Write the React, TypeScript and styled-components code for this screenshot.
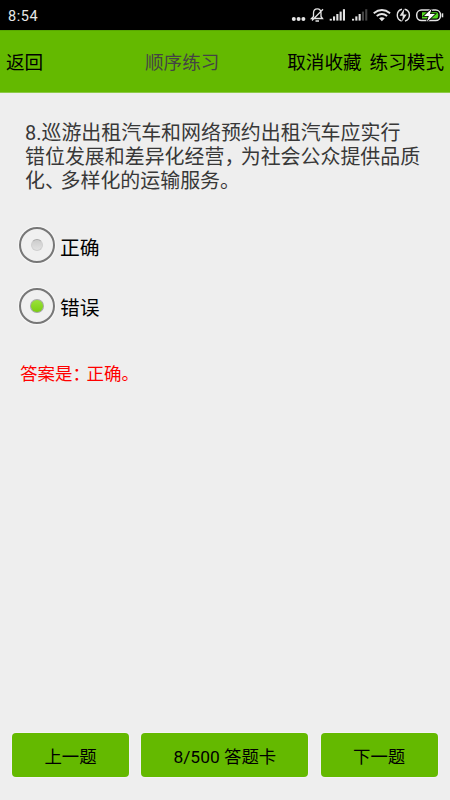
import React from "react";
import styled, { createGlobalStyle } from "styled-components";

const GlobalStyle = createGlobalStyle`
  * { box-sizing: border-box; }
  body { margin: 0; background: #eee; }
`;

const GREEN = "#64b900";

const Screen = styled.div`
  width: 450px;
  height: 800px;
  display: flex;
  flex-direction: column;
  overflow: hidden;
  background: #eeeeee;
  color: #000;
  font-family: Roboto, "Noto Sans CJK SC", sans-serif;
`;

const StatusBar = styled.div`
  height: 30px;
  flex: none;
  display: flex;
  justify-content: space-between;
  background: #000;
`;

const Clock = styled.span`
  padding-left: 8px;
  font: 14.5px/33px Roboto, sans-serif;
  letter-spacing: 0.6px;
  color: #e6e6e6;
`;

const StatusIcons = styled.svg`
  display: block;
  width: 170px;
  height: 30px;
`;

const Header = styled.header`
  height: 63px;
  flex: none;
  display: grid;
  grid-template-columns: 139px 88px 1fr;
  align-items: center;
  padding: 3px 6px 0 6px;
  border-top: 1px solid #59a800;
  border-bottom: 1px solid #8dca47;
  background: ${GREEN};
  font-size: 18.6px;
  line-height: 26px;
  white-space: nowrap;
`;

const Title = styled.span`
  color: #444;
`;

const Actions = styled.div`
  display: flex;
  justify-content: flex-end;
  gap: 8px;
`;

const Content = styled.main`
  flex: 1;
`;

const Question = styled.div`
  margin: 28px 0 0 25px;
  font-size: 19.95px;
  line-height: 24px;
  color: #383838;
  white-space: nowrap;
`;

const Mark = styled.span<{ $w: number; $inset?: number }>`
  display: inline-block;
  width: ${(p) => p.$w}px;
  padding-left: ${(p) => p.$inset ?? 0}px;
  font-feature-settings: "halt" 1;
`;

const Options = styled.div`
  display: grid;
  grid-auto-rows: 60.5px;
  margin: 22px 0 0 19px;
`;

const Option = styled.div`
  display: flex;
  align-items: center;
  gap: 5px;
  font-size: 19.8px;
  line-height: 26px;
`;

const OptionText = styled.span`
  padding-top: 7px;
`;

const Radio = styled.span`
  width: 36px;
  height: 36px;
  display: grid;
  place-items: center;
  border: 2px solid #777;
  border-radius: 50%;
  background: #f0f0f0;
  box-shadow: 0 0 1px 1px #f8f8f8;
`;

const Dot = styled.span<{ $on: boolean }>`
  width: ${(p) => (p.$on ? 14 : 12)}px;
  height: ${(p) => (p.$on ? 14 : 12)}px;
  border-radius: 50%;
  border: 1px solid ${(p) => (p.$on ? "#a2a8a0" : "#cfcfcf")};
  border-top-color: #aaa;
  background: ${(p) =>
    p.$on
      ? "linear-gradient(#9be23b, #7bce12)"
      : "linear-gradient(#cccccc, #e2e2e2)"};
`;

const Answer = styled.p`
  margin: 26px 0 0 20px;
  font-size: 17.5px;
  line-height: 24px;
  color: #ff0000;
`;

const Footer = styled.footer`
  height: 67px;
  flex: none;
  display: grid;
  grid-template-columns: 117px 167px 117px;
  grid-template-rows: 44px;
  gap: 12.300px;
  padding-left: 12px;
`;

const Button = styled.button`
  border: 0;
  border-radius: 4px;
  padding: 3px 0 0;
  background: ${GREEN};
  box-shadow: 0 0 1px 1px #f4f2f7;
  font: 17.4px/24px Roboto, "Noto Sans CJK SC", sans-serif;
  color: #000;
`;

const bars = [0, 1, 2, 3, 4];

function SystemIcons() {
  return (
    <StatusIcons viewBox="280 0 170 30" fill="none" stroke="#e4e4e4">
      <g fill="#e4e4e4" stroke="none">
        <circle cx="293.8" cy="19" r="2" />
        <circle cx="298.6" cy="19" r="2" />
        <circle cx="303.4" cy="19" r="2" />
        {bars.map((i) => (
          <rect key={i} x={329.7 + i * 3.3} y={18.8 - i * 2.4} width="2.1" height={1.8 + i * 2.4} />
        ))}
        {bars.map((i) => (
          <rect key={i} x={352 + i * 3.3} y={18.8 - i * 2.4} width="2.1" height={1.8 + i * 2.4} opacity={i > 2 ? 0.3 : 1} />
        ))}
      </g>
      <path d="M311.5 18.5h11l-1.500-2V13c0-3-1.500-4.200-3.700-4.200s-3.800 1.400-3.800 4.200v3.500zM315.500 21h3.500M312 20.500L323 9.200" strokeWidth="1.3" />
      <path d="M373.700 13.200q8.200-6.500 16.400 0M376.700 16.100q5.200-4 10.400 0" strokeWidth="1.9" />
      <path d="M379 18.200q2.900-2 5.800 0l-2.900 3z" fill="#e4e4e4" stroke="none" />
      <path d="M402 9.300a6.100 6.100 0 0 0-.3 11.800M404.700 9.300a6.100 6.100 0 0 1 .3 11.800" strokeWidth="1.4" />
      <path d="M404.300 8.800l-4.700 7h3.200l-.8 5.700 4.700-7.100h-3.200z" fill="#e4e4e4" stroke="none" />
      <rect x="416.700" y="10" width="23.800" height="10.600" rx="4.800" strokeWidth="1.500" />
      <path d="M422 12.200h14.500q1.800 0 1.800 3.100t-1.800 3.100H422z" fill="#52d91e" stroke="none" />
      <path d="M442.500 13.300v4" strokeWidth="1.500" />
      <path d="M431.600 8.800l-7.600 7.200h4.800l-2 5.700 8.200-7.700h-5z" fill="#fff" stroke="#000" strokeWidth="1.600" paintOrder="stroke" />
    </StatusIcons>
  );
}

export default function App() {
  return (
    <Screen>
      <GlobalStyle />
      <StatusBar>
        <Clock>8:54</Clock>
        <SystemIcons />
      </StatusBar>
      <Header>
        <span>返回</span>
        <Title>顺序练习</Title>
        <Actions>
          <span>取消收藏</span>
          <span>练习模式</span>
        </Actions>
      </Header>
      <Content>
        <Question>
          8.巡游出租汽车和网络预约出租汽车应实行
          <br />
          错位发展和差异化经营<Mark $w={16.3}>，</Mark>为社会公众提供品质
          <br />
          化<Mark $w={15.6}>、</Mark>多样化的运输服务。
        </Question>
        <Options role="radiogroup">
          <Option role="radio" aria-checked={false}>
            <Radio><Dot $on={false} /></Radio>
            <OptionText>正确</OptionText>
          </Option>
          <Option role="radio" aria-checked>
            <Radio><Dot $on /></Radio>
            <OptionText>错误</OptionText>
          </Option>
        </Options>
        <Answer>
          答案是<Mark $w={14}>：</Mark>正确<Mark $w={14}>。</Mark>
        </Answer>
      </Content>
      <Footer>
        <Button>上一题</Button>
        <Button>8/500 答题卡</Button>
        <Button>下一题</Button>
      </Footer>
    </Screen>
  );
}
